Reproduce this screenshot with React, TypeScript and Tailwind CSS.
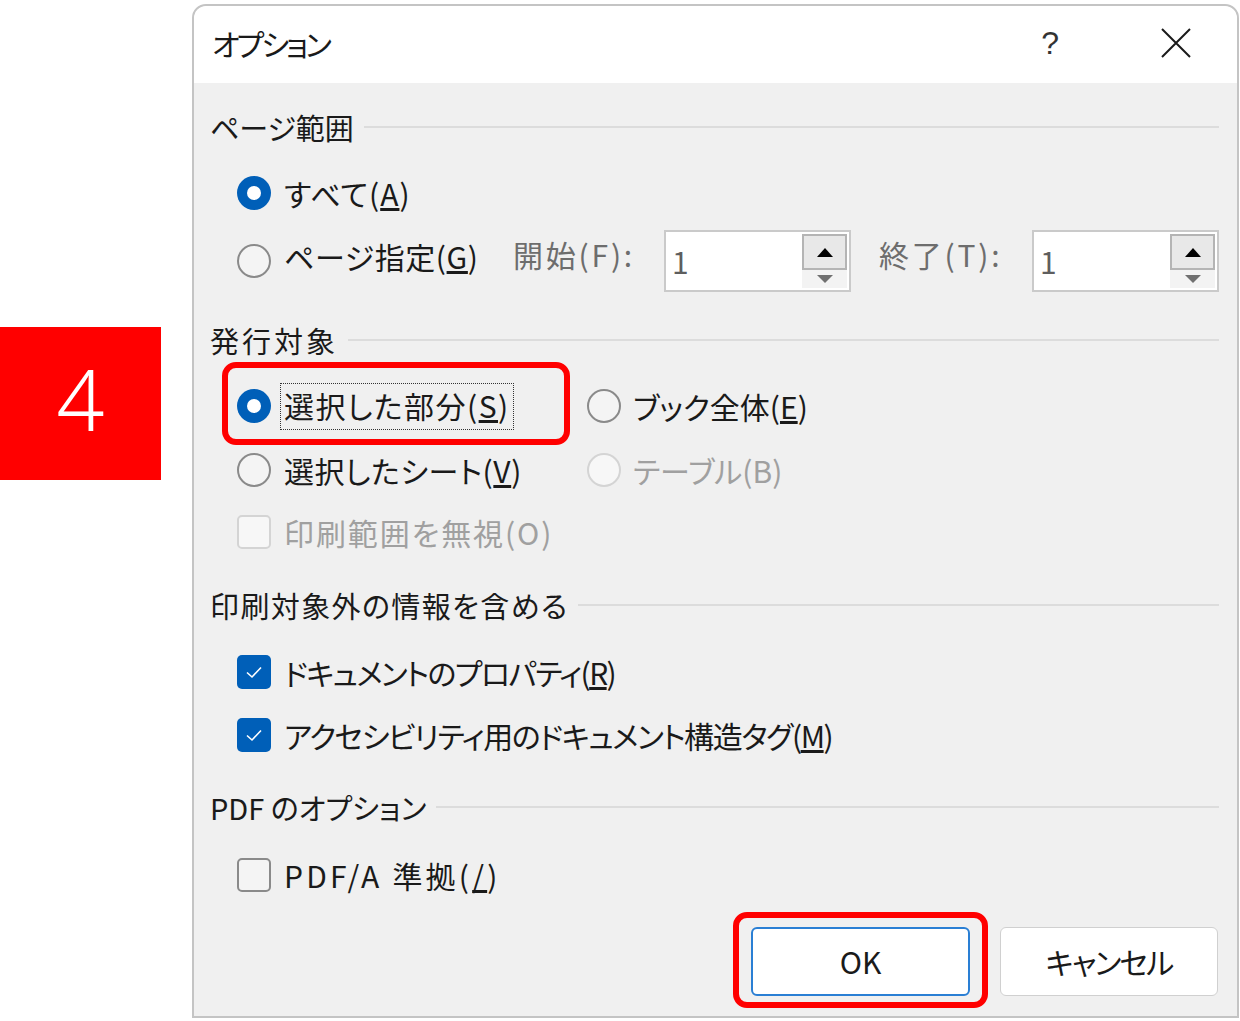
import React from "react";

const FONT = "font-['Meiryo_UI','Noto_Sans_CJK_JP',sans-serif] [font-feature-settings:'palt']";

function Radio({ checked, disabled }: { checked?: boolean; disabled?: boolean }) {
  if (checked) {
    return (
      <div className="w-[34px] h-[34px] rounded-full bg-[#005fb8] flex items-center justify-center shrink-0">
        <div className="w-[14px] h-[14px] rounded-full bg-white" />
      </div>
    );
  }
  return (
    <div
      className={`w-[34px] h-[34px] rounded-full border-2 shrink-0 ${
        disabled ? "border-[#d4d4d4] bg-[#f7f7f7]" : "border-[#8a8a8a] bg-[#f4f4f4]"
      }`}
    />
  );
}

function Check({ checked, disabled }: { checked?: boolean; disabled?: boolean }) {
  if (checked) {
    return (
      <div className="w-[34px] h-[34px] rounded-[5px] bg-[#005fb8] flex items-center justify-center shrink-0">
        <svg width="20" height="16" viewBox="0 0 20 16">
          <path d="M3 8.5 L8 13 L17 3.5" fill="none" stroke="white" strokeWidth="1.6" />
        </svg>
      </div>
    );
  }
  return (
    <div
      className={`w-[34px] h-[34px] rounded-[5px] border-2 shrink-0 ${
        disabled ? "border-[#d4d4d4] bg-[#f7f7f7]" : "border-[#8a8a8a] bg-[#f4f4f4]"
      }`}
    />
  );
}

function Header({ text, mt, track = "" }: { text: string; mt: string; track?: string }) {
  return (
    <div className={`flex items-center h-[40px] ${mt}`}>
      <span className={`text-[29px] text-[#1a1a1a] whitespace-nowrap leading-none ${track}`}>{text}</span>
      <div className="flex-1 h-[2px] bg-[#dcdcdc] ml-[10px] mr-[18px]" />
    </div>
  );
}

function Label({
  children,
  disabled,
  track = "",
}: {
  children: React.ReactNode;
  disabled?: boolean;
  track?: string;
}) {
  return (
    <span
      className={`text-[30px] leading-none whitespace-nowrap ${track} ${
        disabled ? "text-[#a0a0a0]" : "text-[#1a1a1a]"
      }`}
    >
      {children}
    </span>
  );
}

function Spin() {
  return (
    <div className="w-[187px] h-[62px] border-2 border-[#cacaca] bg-white flex items-center shrink-0">
      <span className="flex-1 pl-[6px] text-[30px] text-[#5e5e5e] leading-none">1</span>
      <div className="w-[45px] h-[54px] mr-[2px] flex flex-col">
        <div className="h-[36px] bg-[#e8e8e8] border-2 border-[#b4b4b4] flex items-center justify-center">
          <svg width="16" height="10" viewBox="0 0 16 10">
            <path d="M0 10 L8 1 L16 10 Z" fill="#000" />
          </svg>
        </div>
        <div className="flex-1 bg-[#f3f3f3] flex items-center justify-center">
          <svg width="16" height="10" viewBox="0 0 16 10">
            <path d="M0 1 L8 9 L16 1 Z" fill="#707070" />
          </svg>
        </div>
      </div>
    </div>
  );
}

export default function App() {
  return (
    <div className={`w-[1240px] h-[1021px] bg-white flex overflow-hidden ${FONT}`}>
      {/* 番号 */}
      <div className="w-[192px] shrink-0">
        <div className="w-[161px] h-[153px] mt-[327px] bg-[#ff0000] flex items-center justify-center pb-[10px]">
          <span className="text-white text-[84px] font-light leading-none font-['Noto_Sans',sans-serif] [font-feature-settings:normal]">
            4
          </span>
        </div>
      </div>

      {/* ダイアログ */}
      <div className="relative w-[1047px] h-[1014px] mt-[4px] border-2 border-[#c4c4c4] rounded-t-[14px] bg-[#f0f0f0] flex flex-col overflow-hidden">
        {/* タイトルバー */}
        <div className="h-[77px] bg-white flex items-center pl-[18px] pb-[4px] shrink-0 rounded-t-[12px]">
          <span className="text-[30px] text-[#1a1a1a] leading-none flex-1 tracking-[-3px]">オプション</span>
          <span className="text-[32px] text-[#333] leading-none font-['Liberation_Sans',sans-serif] font-light mr-[102px]">
            ?
          </span>
          <svg width="30" height="30" viewBox="0 0 30 30" className="mr-[46px]">
            <path d="M1 1 L29 29 M29 1 L1 29" stroke="#1a1a1a" strokeWidth="2" />
          </svg>
        </div>

        <div className="flex flex-col pl-[16px]">
          <Header text="ページ範囲" mt="mt-[24px]" />
          <div className="flex items-center h-[50px] mt-[21px] pl-[27px] gap-[13px]">
            <Radio checked />
            <Label track="tracking-[1px]">
              すべて(<u>A</u>)
            </Label>
          </div>
          <div className="flex items-center h-[62px] mt-[12px] pl-[27px]">
            <Radio />
            <span className="ml-[13px] pb-[8px] w-[229px] shrink-0">
              <Label track="tracking-[0.6px]">
                ページ指定(<u>G</u>)
              </Label>
            </span>
            <span className="w-[151px] shrink-0 pb-[14px] text-[30px] leading-none text-[#6d6d6d] tracking-[2.8px]">
              開始(F):
            </span>
            <Spin />
            <span className="ml-[28px] w-[153px] shrink-0 pb-[14px] text-[30px] leading-none text-[#6d6d6d] tracking-[2.8px]">
              終了(T):
            </span>
            <Spin />
          </div>

          <Header text="発行対象" mt="mt-[28px]" track="tracking-[3px]" />
          <div className="flex items-center h-[50px] mt-[21px] pl-[27px]">
            <div className="w-[350px] flex items-center gap-[13px]">
              <Radio checked />
              <span className="border border-dotted border-[#333] px-[3px] py-[6px] -ml-[4px]">
                <Label track="tracking-[1.5px]">
                  選択した部分(<u>S</u>)
                </Label>
              </span>
            </div>
            <div className="flex items-center gap-[12px]">
              <Radio />
              <Label>
                ブック全体(<u>E</u>)
              </Label>
            </div>
          </div>
          <div className="flex items-center h-[50px] mt-[14px] pl-[27px]">
            <div className="w-[350px] flex items-center gap-[13px]">
              <Radio />
              <Label track="tracking-[0.6px]">
                選択したシート(<u>V</u>)
              </Label>
            </div>
            <div className="flex items-center gap-[12px]">
              <Radio disabled />
              <Label disabled>テーブル(B)</Label>
            </div>
          </div>
          <div className="flex items-center h-[50px] mt-[12px] pl-[27px] gap-[13px]">
            <Check disabled />
            <Label disabled track="tracking-[1.9px]">
              印刷範囲を無視(O)
            </Label>
          </div>

          <Header text="印刷対象外の情報を含める" mt="mt-[28px]" track="tracking-[1.4px]" />
          <div className="flex items-center h-[50px] mt-[22px] pl-[27px] gap-[13px]">
            <Check checked />
            <Label track="tracking-[-1.6px]">
              ドキュメントのプロパティ(<u>R</u>)
            </Label>
          </div>
          <div className="flex items-center h-[50px] mt-[13px] pl-[27px] gap-[13px]">
            <Check checked />
            <Label track="tracking-[-1.4px]">
              アクセシビリティ用のドキュメント構造タグ(<u>M</u>)
            </Label>
          </div>

          <Header text="PDF のオプション" mt="mt-[27px]" />
          <div className="flex items-center h-[50px] mt-[23px] pl-[27px] gap-[13px]">
            <Check />
            <Label track="tracking-[3.2px]">
              PDF/A 準拠(<u>/</u>)
            </Label>
          </div>

          {/* ボタン */}
          <div className="flex justify-end gap-[30px] mt-[27px] pr-[19px]">
            <button className="w-[219px] h-[69px] bg-white border-2 border-[#2a7fd4] rounded-[6px] text-[30px] text-[#1a1a1a]">
              OK
            </button>
            <button className="w-[218px] h-[69px] bg-white border border-[#d0d0d0] rounded-[6px] text-[30px] text-[#1a1a1a] tracking-[-1.8px]">
              キャンセル
            </button>
          </div>
        </div>

        {/* 強調枠 */}
        <div className="absolute left-[28px] top-[356px] w-[348px] h-[83px] border-[6px] border-[#ff0000] rounded-[14px]" />
        <div className="absolute left-[539px] top-[906px] w-[255px] h-[96px] border-[6px] border-[#ff0000] rounded-[14px]" />
      </div>
    </div>
  );
}
